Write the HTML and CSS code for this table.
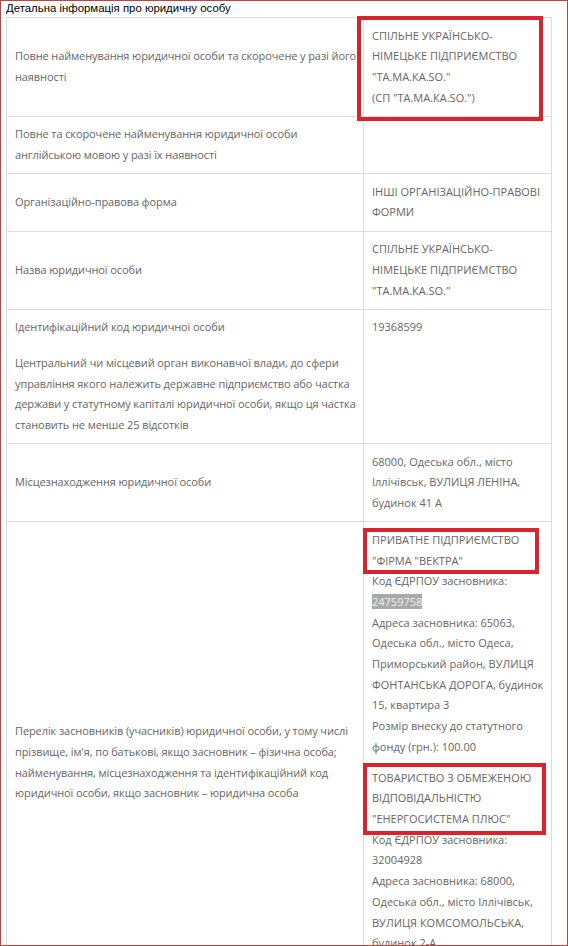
FILE: index.html
```html
<!DOCTYPE html>
<html lang="uk">
<head>
<meta charset="utf-8">
<title>Детальна інформація про юридичну особу</title>
<link rel="stylesheet" href="styles.css">
</head>
<body>
<div class="page">
  <div class="title">Детальна інформація про юридичну особу</div>
  <table class="info">
    <colgroup><col class="c-label"><col class="c-value"></colgroup>
    <tbody>
      <tr>
        <td class="label">Повне найменування юридичної особи та скорочене у разі його наявності</td>
        <td class="value">СПІЛЬНЕ УКРАЇНСЬКО-НІМЕЦЬКЕ ПІДПРИЄМСТВО "ТА.МА.КА.SO."<br>(СП "ТА.МА.КА.SO.")</td>
      </tr>
      <tr>
        <td class="label">Повне та скорочене найменування юридичної особи<br>англійською мовою у разі їх наявності</td>
        <td class="value"></td>
      </tr>
      <tr>
        <td class="label">Організаційно-правова форма</td>
        <td class="value">ІНШІ ОРГАНІЗАЦІЙНО-ПРАВОВІ ФОРМИ</td>
      </tr>
      <tr>
        <td class="label">Назва юридичної особи</td>
        <td class="value">СПІЛЬНЕ УКРАЇНСЬКО-НІМЕЦЬКЕ ПІДПРИЄМСТВО "ТА.МА.КА.SO."</td>
      </tr>
      <tr class="pre">
        <td class="label">Ідентифікаційний код юридичної особи</td>
        <td class="value">19368599</td>
      </tr>
      <tr class="join">
        <td class="label">Центральний чи місцевий орган виконавчої влади, до сфери управління якого належить державне підприємство або частка держави у статутному капіталі юридичної особи, якщо ця частка становить не менше 25 відсотків</td>
        <td class="value"></td>
      </tr>
      <tr>
        <td class="label">Місцезнаходження юридичної особи</td>
        <td class="value">68000, Одеська обл., місто Іллічівськ, ВУЛИЦЯ ЛЕНІНА, будинок 41 А</td>
      </tr>
      <tr>
        <td class="label">Перелік засновників (учасників) юридичної особи, у тому числі прізвище, ім'я, по батькові, якщо засновник – фізична особа; найменування, місцезнаходження та ідентифікаційний код юридичної особи, якщо засновник – юридична особа</td>
        <td class="value">
          <div class="founder">
            <div>ПРИВАТНЕ ПІДПРИЄМСТВО "ФІРМА "ВЕКТРА"</div>
            <div>Код ЄДРПОУ засновника: <span class="selected">24759758</span></div>
            <div>Адреса засновника: 65063, Одеська обл., місто Одеса, Приморський район, ВУЛИЦЯ ФОНТАНСЬКА ДОРОГА, будинок 15, квартира 3</div>
            <div>Розмір внеску до статутного фонду (грн.): 100.00</div>
          </div>
          <div class="founder">
            <div>ТОВАРИСТВО З ОБМЕЖЕНОЮ ВІДПОВІДАЛЬНІСТЮ "ЕНЕРГОСИСТЕМА ПЛЮС"</div>
            <div>Код ЄДРПОУ засновника: 32004928</div>
            <div>Адреса засновника: 68000, Одеська обл., місто Іллічівськ, ВУЛИЦЯ КОМСОМОЛЬСЬКА, будинок 2-А</div>
            <div>Розмір внеску до статутного фонду (грн.): 100.00</div>
          </div>
        </td>
      </tr>
    </tbody>
  </table>

  <div class="mark mark-name"></div>
  <div class="mark mark-f1"></div>
  <div class="mark mark-f2"></div>
</div>
<div class="frame"></div>
</body>
</html>
```
FILE: styles.css
```css
html, body {
  margin: 0;
  padding: 0;
  background: #fff;
}

.page {
  position: relative;
  padding: 0 0 0 6px;
}

.title {
  font-family: "Liberation Sans", Arial, sans-serif;
  font-size: 11.4px;
  line-height: 17px;
  height: 17px;
  color: #000;
}

.info {
  width: 545px;
  table-layout: fixed;
  border-collapse: collapse;
  font-family: "Open Sans", "Noto Sans", sans-serif;
  font-size: 11px;
  line-height: 20.7px;
  color: #666;
}

.c-label { width: 357px; }
.c-value { width: 188px; }

.info td {
  border: 1px solid #dcdcdc;
  padding: 7.5px 8px;
  vertical-align: middle;
}

.info td.label {
  padding-right: 0;
  letter-spacing: -0.1px;
}

.info td.value {
  padding-right: 5px;
}

.info tr.pre td {
  border-bottom: 0;
  vertical-align: top;
}

.info tr.join td {
  border-top: 0;
}

.founder + .founder {
  margin-top: 10px;
}

.selected {
  background: #a9a9a9;
  color: #f2f2f2;
}

.mark {
  position: absolute;
  border: 4px solid #d9232d;
  box-sizing: border-box;
}

.mark-name { left: 357px; top: 16px; width: 186px; height: 105px; }
.mark-f1 { left: 363px; top: 528px; width: 176px; height: 46px; }
.mark-f2 { left: 363px; top: 763px; width: 183px; height: 72px; }

.frame {
  position: fixed;
  top: 0;
  left: 0;
  right: 0;
  bottom: 0;
  border: 1px solid #b94444;
  pointer-events: none;
}
```
